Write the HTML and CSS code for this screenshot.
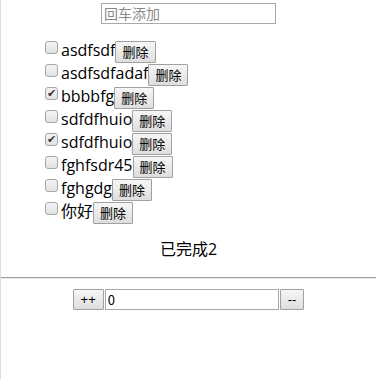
FILE: index.html
```html
<!DOCTYPE html>
<html lang="zh">
<head>
    <meta charset="UTF-8">
    <meta name="viewport" content="width=device-width, initial-scale=1.0">
    <title>Todo</title>
    <link rel="stylesheet" href="styles.css">
</head>
<body>
    <div class="todo">
        <div class="add-row">
            <input type="text" class="add-input" placeholder="回车添加">
        </div>
        <ul class="todo-list">
            <li><input type="checkbox"><span>asdfsdf</span><button>删除</button></li>
            <li><input type="checkbox"><span>asdfsdfadaf</span><button>删除</button></li>
            <li><input type="checkbox" checked><span>bbbbfg</span><button>删除</button></li>
            <li><input type="checkbox"><span>sdfdfhuio</span><button>删除</button></li>
            <li><input type="checkbox" checked><span>sdfdfhuio</span><button>删除</button></li>
            <li><input type="checkbox"><span>fghfsdr45</span><button>删除</button></li>
            <li><input type="checkbox"><span>fghgdg</span><button>删除</button></li>
            <li><input type="checkbox"><span>你好</span><button>删除</button></li>
        </ul>
        <p class="done">已完成2</p>
    </div>
    <hr>
    <div class="counter">
        <button>++</button><input type="text" class="count-input" value="0"><button>--</button>
    </div>
</body>
</html>
```

FILE: styles.css
```css
html {
    min-height: 100%;
    border-left: 1px solid #ddd;
    box-sizing: border-box;
}
body {
    margin: 0;
    font-family: "Open Sans", "Noto Sans CJK SC", sans-serif;
    font-size: 16px;
    color: #000;
    background: white;
}
.add-row {
    text-align: center;
    padding-top: 2px;
}
.add-input {
    width: 169px;
    height: 17px;
    padding: 1px 2px;
    border: 1px solid #a9a9a9;
    font-family: "Noto Sans CJK SC", sans-serif;
    font-size: 14px;
    box-sizing: content-box;
}
.add-input::placeholder {
    color: #888;
}
.todo-list {
    margin: 14px 0 16px;
    padding-left: 40px;
    list-style: none;
}
.todo-list li {
    height: 23px;
    line-height: 23px;
}
.todo-list input[type="checkbox"] {
    appearance: none;
    position: relative;
    width: 13px;
    height: 13px;
    margin: 3px 3px 3px 4px;
    border: 1px solid #a6a6a6;
    border-radius: 3px;
    background: linear-gradient(#f4f4f4, #e2e2e2);
    vertical-align: -1px;
}
.todo-list input[type="checkbox"]:checked::after {
    content: "✔";
    position: absolute;
    left: 0;
    top: 0;
    width: 11px;
    height: 11px;
    line-height: 11px;
    text-align: center;
    font-family: "DejaVu Sans", sans-serif;
    font-size: 11px;
    color: #3a3a3a;
}
button {
    font-family: "Noto Sans CJK SC", sans-serif;
    font-size: 13px;
    padding: 1px 6px;
    height: 22px;
    line-height: 18px;
    border: 1px solid #a0a0a0;
    background: linear-gradient(#f6f6f6, #dedede);
    border-radius: 1px;
    color: #000;
    vertical-align: middle;
}
.done {
    text-align: center;
    margin: 16px 0;
    line-height: 23px;
}
hr {
    margin: 13px 0 0;
    border: none;
    border-top: 1px solid #9a9a9a;
    border-bottom: 1px solid #eee;
}
.counter {
    text-align: center;
    padding-top: 10px;
    font-size: 0;
}
.counter button {
    height: 21px;
    padding: 0 7px;
    font-family: "Liberation Sans", sans-serif;
    font-size: 13px;
    vertical-align: top;
}
.count-input {
    width: 168px;
    height: 17px;
    padding: 1px 2px;
    margin: 0 1px;
    border: 1px solid #a9a9a9;
    font-family: "Noto Sans CJK SC", sans-serif;
    font-size: 13px;
    vertical-align: top;
}
```
